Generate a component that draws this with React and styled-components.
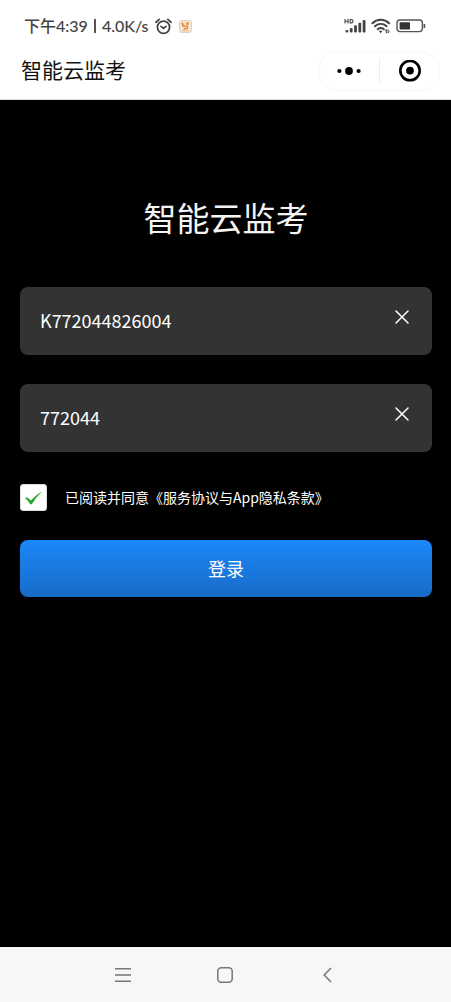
import React, { useState } from 'react'
import styled, { createGlobalStyle } from 'styled-components'

const GlobalStyle = createGlobalStyle`
  *,
  *::before,
  *::after {
    box-sizing: border-box;
  }

  body {
    margin: 0;
    background: #000;
    font-family: 'Noto Sans CJK SC', 'Noto Sans', sans-serif;
  }

  button,
  input {
    font-family: inherit;
  }

  button {
    padding: 0;
    border: none;
    background: none;
    cursor: pointer;
  }
`

const Screen = styled.div`
  display: flex;
  flex-direction: column;
  min-height: 100vh;
`

const Header = styled.header`
  background: #fff;
  border-bottom: 1px solid #ddd;
`

const StatusBar = styled.div`
  display: flex;
  align-items: center;
  justify-content: space-between;
  height: 50px;
  padding: 2px 25px 0 24px;
  color: #444;
`

const StatusGroup = styled.div`
  display: flex;
  align-items: center;
  gap: ${(props) => props.$gap}px;
`

const StatusText = styled.span`
  font-family: 'Lato', 'Noto Sans CJK SC', sans-serif;
  font-size: 16px;
  font-weight: 500;
  line-height: 24px;
`

const StatusDivider = styled.span`
  width: 2px;
  height: 14px;
  background: #555;
`

const TitleBar = styled.div`
  display: flex;
  align-items: center;
  justify-content: space-between;
  height: 49px;
  padding: 0 11px 8px 21px;
`

const PageTitle = styled.h1`
  margin: 0;
  padding-bottom: 4px;
  color: #111;
  font-size: 21px;
  font-weight: 400;
  line-height: 32px;
`

const Capsule = styled.div`
  display: flex;
  align-items: center;
  width: 122px;
  height: 40px;
  border: 1px solid #f7f7f7;
  border-radius: 20px;
`

const CapsuleButton = styled.button`
  display: flex;
  flex: 1;
  align-items: center;
  justify-content: center;
  height: 100%;
`

const CapsuleDivider = styled.span`
  width: 1px;
  height: 26px;
  background: #eee;
`

const Main = styled.main`
  flex: 1;
  padding: 91px 19px 40px 20px;
`

const AppName = styled.h2`
  margin: 0 0 44px;
  color: #f4f4f4;
  font-size: 33px;
  font-weight: 400;
  line-height: 52px;
  text-align: center;
`

const Form = styled.form`
  display: flex;
  flex-direction: column;
  gap: 29px;
`

const FieldBox = styled.div`
  display: flex;
  height: 68px;
  padding: 0 20px;
  border-radius: 8px;
  background: #333;
`

const FieldInput = styled.input`
  flex: 1;
  min-width: 0;
  padding: 0 0 2px;
  border: none;
  outline: none;
  background: transparent;
  color: #fff;
  font-size: 18px;
  line-height: 28px;
`

const ClearButton = styled.button`
  display: flex;
  align-items: center;
  justify-content: center;
  width: 20px;
  height: 60px;
`

const Agreement = styled.div`
  display: flex;
  align-items: center;
  gap: 18px;
  height: 30px;
  padding-top: 2px;
  color: #fff;
  font-size: 14px;
  line-height: 20px;
`

const TickWrapper = styled.span`
  display: grid;
  width: 27px;
  height: 27px;

  & > * {
    grid-area: 1 / 1;
  }

  svg {
    pointer-events: none;
  }
`

const Tick = styled.input`
  appearance: none;
  width: 27px;
  height: 27px;
  margin: 0;
  border: 1px solid #ddd;
  border-radius: 3px;
  background: #fff;
`

const TermsLink = styled.a`
  color: inherit;
  text-decoration: none;
`

const LoginButton = styled.button`
  height: 57px;
  padding-bottom: 2px;
  border-radius: 8px;
  background: linear-gradient(#1b88fa, #186bc6);
  color: #fff;
  font-size: 18px;
  line-height: 28px;
`

const BottomNav = styled.nav`
  display: flex;
  align-items: center;
  justify-content: space-between;
  height: 55px;
  padding: 0 112px 0 111px;
  background: #f7f7f7;
`

const NavButton = styled.button`
  display: flex;
  align-items: center;
  justify-content: center;
  width: 24px;
  height: 24px;
`

function AlarmIcon() {
  return (
    <svg width='17' height='17' viewBox='0 0 17 17' fill='none' stroke='#444' strokeWidth='1.8' strokeLinecap='round'>
      <circle cx='8.5' cy='9.2' r='6.1' />
      <path d='M1 4.2 4.2 1.4M16 4.2 12.8 1.4' />
      <path d='M6 8.4 8.5 10.3 11 8.4' />
    </svg>
  )
}

function AppBadgeIcon() {
  return (
    <svg width='13' height='13' viewBox='0 0 13 13' fill='none'>
      <rect x='.5' y='.5' width='12' height='12' rx='2.5' fill='#f6e6d4' stroke='#ddd0c2' />
      <path d='M3.2 2.6 4 5.8 6.6 6.6' stroke='#df842f' strokeWidth='1.6' />
      <path d='M6.6 2.2H10V4.8H7.4Z' fill='#e79a50' />
      <path d='M8.2 5v3.4L4.6 9' stroke='#df842f' strokeWidth='1.4' />
      <path d='M2.8 10.8h7.4' stroke='#efc39a' strokeWidth='1' />
    </svg>
  )
}

function SignalIcon() {
  return (
    <svg width='22' height='16' viewBox='0 0 22 16' fill='#444'>
      <path d='M1 1v4.4M4 1v4.4M1 3.2h3' stroke='#444' strokeWidth='1.1' />
      <path d='M6.2 1.5h1.1a1.7 1.7 0 0 1 0 3.4H6.2z' fill='none' stroke='#444' strokeWidth='1.1' />
      <rect x='1.5' y='12' width='2.8' height='2.6' rx='1' />
      <rect x='5.8' y='10' width='2.8' height='4.6' rx='1' />
      <rect x='10.1' y='7.3' width='2.8' height='7.3' rx='1' />
      <rect x='14.4' y='4.8' width='2.8' height='9.8' rx='1' />
      <rect x='18.7' y='2' width='2.8' height='12.6' rx='1' />
    </svg>
  )
}

function WifiIcon() {
  return (
    <svg width='20' height='16' viewBox='0 0 20 16' fill='none' stroke='#444' strokeWidth='2' strokeLinecap='round'>
      <path d='M1.4 5.2C6.3.6 13.2.6 18.1 5.2' />
      <path d='M3.9 8.3c3.5-3 8.2-3 11.7 0' />
      <path d='M6.6 11.2c2-1.5 4.3-1.5 6.3 0' />
      <path d='M7.6 12.8h4L9.6 15.2z' fill='#444' stroke='none' />
      <path d='M15.3 15v-3.4l-1.1 1.2M17.1 11.6V15l1.1-1.2' strokeWidth='1' />
    </svg>
  )
}

function BatteryIcon() {
  return (
    <svg width='30' height='14' viewBox='0 0 30 14' fill='none'>
      <rect x='1' y='1' width='25.4' height='11.6' rx='3' stroke='#555' strokeWidth='1.4' />
      <rect x='3.6' y='3.2' width='10.4' height='7.2' rx='.6' fill='#333' />
      <path d='M28.4 5v4' stroke='#555' strokeWidth='1.6' />
    </svg>
  )
}

function MoreIcon() {
  return (
    <svg width='24' height='10' viewBox='0 0 24 10' fill='#000'>
      <circle cx='2.4' cy='5' r='2.1' />
      <circle cx='12' cy='5' r='3.9' />
      <circle cx='21.6' cy='5' r='2.1' />
    </svg>
  )
}

function TargetIcon() {
  return (
    <svg width='23' height='22' viewBox='0 0 23 22'>
      <circle cx='12' cy='10.6' r='9.7' fill='none' stroke='#000' strokeWidth='2.6' />
      <circle cx='12' cy='10.6' r='3.9' />
    </svg>
  )
}

function CrossIcon() {
  return (
    <svg width='14' height='14' viewBox='0 0 14 14' stroke='#fff' strokeWidth='1.5' strokeLinecap='round'>
      <path d='M1 1 13 13M13 1 1 13' />
    </svg>
  )
}

function CheckIcon() {
  return (
    <svg width='27' height='27' viewBox='0 0 27 27' fill='#25a52b'>
      <path d='M5.2 14.2 7 13.2 11 16.6C14 13.2 18 9.8 22.3 7.6 18.3 11 14.6 15.5 11.8 20.2H10.1C8.9 17.9 7.3 15.9 5.2 14.2z' />
    </svg>
  )
}

function Field({ label, value, onChange }) {
  return (
    <FieldBox>
      <FieldInput
        type='text'
        aria-label={label}
        value={value}
        onChange={(e) => onChange(e.target.value)}
      />
      <ClearButton
        type='button'
        aria-label={`清除${label}`}
        onClick={() => onChange('')}>
        <CrossIcon />
      </ClearButton>
    </FieldBox>
  )
}

export default function App() {
  const [account, setAccount] = useState('K772044826004')
  const [password, setPassword] = useState('772044')
  const [agreed, setAgreed] = useState(true)

  return (
    <Screen>
      <GlobalStyle />
      <Header>
        <StatusBar>
          <StatusGroup $gap={7}>
            <StatusGroup $gap={6}>
              <StatusText>下午4:39</StatusText>
              <StatusDivider />
              <StatusText>4.0K/s</StatusText>
              <AlarmIcon />
            </StatusGroup>
            <AppBadgeIcon />
          </StatusGroup>
          <StatusGroup $gap={5}>
            <SignalIcon />
            <WifiIcon />
            <BatteryIcon />
          </StatusGroup>
        </StatusBar>
        <TitleBar>
          <PageTitle>智能云监考</PageTitle>
          <Capsule>
            <CapsuleButton type='button' aria-label='更多'>
              <MoreIcon />
            </CapsuleButton>
            <CapsuleDivider />
            <CapsuleButton type='button' aria-label='关闭'>
              <TargetIcon />
            </CapsuleButton>
          </Capsule>
        </TitleBar>
      </Header>

      <Main>
        <AppName>智能云监考</AppName>
        <Form onSubmit={(e) => e.preventDefault()}>
          <Field label='准考证号' value={account} onChange={setAccount} />
          <Field label='口令' value={password} onChange={setPassword} />
          <Agreement>
            <TickWrapper>
              <Tick
                id='agree'
                type='checkbox'
                checked={agreed}
                onChange={(e) => setAgreed(e.target.checked)}
              />
              {agreed ? <CheckIcon /> : null}
            </TickWrapper>
            <span>
              <label htmlFor='agree'>已阅读并同意</label>
              <TermsLink href='#terms'>《服务协议与App隐私条款》</TermsLink>
            </span>
          </Agreement>
          <LoginButton type='submit'>登录</LoginButton>
        </Form>
      </Main>

      <BottomNav>
        <NavButton type='button' aria-label='菜单'>
          <svg width='16' height='16' viewBox='0 0 16 16' stroke='#777' strokeWidth='1.5'>
            <path d='M0 1.8h16M0 8h16M0 14.2h16' />
          </svg>
        </NavButton>
        <NavButton type='button' aria-label='主页'>
          <svg width='16' height='16' viewBox='0 0 16 16' fill='none' stroke='#777' strokeWidth='1.5'>
            <rect x='.8' y='.8' width='14.4' height='14.4' rx='3.5' />
          </svg>
        </NavButton>
        <NavButton type='button' aria-label='返回'>
          <svg width='9' height='16' viewBox='0 0 9 16' fill='none' stroke='#777' strokeWidth='1.5'>
            <path d='M8 1 1.2 8 8 15' />
          </svg>
        </NavButton>
      </BottomNav>
    </Screen>
  )
}
